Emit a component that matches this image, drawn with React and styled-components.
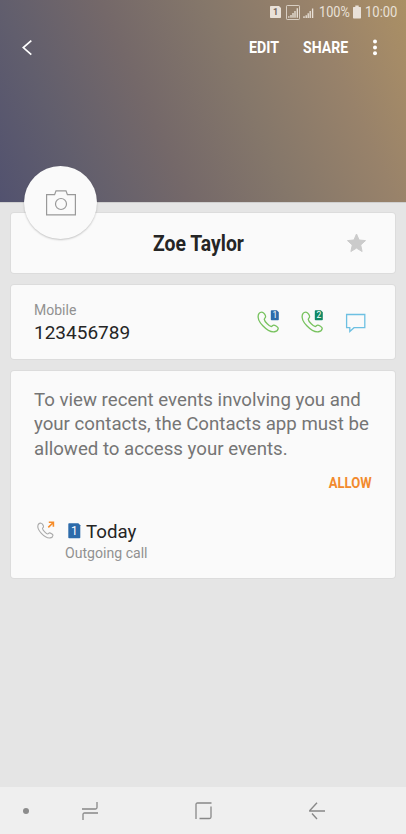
import React from 'react';
import styled, { createGlobalStyle } from 'styled-components';

const GlobalStyle = createGlobalStyle`
  * { box-sizing: border-box; }
  body { margin: 0; background: #e5e5e5; font-family: Roboto, 'Liberation Sans', sans-serif; }
  svg { display: block; overflow: visible; }
`;

const Screen = styled.main`
  width: 406px;
  height: 834px;
  display: flex;
  flex-direction: column;
  background: #e5e5e5;
  overflow: hidden;
`;

const Header = styled.header`
  position: relative;
  height: 202px;
  flex: none;
  color: #fff;
  background: linear-gradient(66deg, #52526f 0%, #615e6d 18%, #746869 38%, #85776a 59%, #98826a 80%, #a58b67 93%, #aa9064 100%);
  box-shadow: 0 1px 0 #cfcfcf;
`;

const StatusBar = styled.div`
  height: 24px;
  padding-right: 8px;
  display: flex;
  align-items: center;
  justify-content: flex-end;
  color: #e9e1d8;
`;

const Condensed = styled.span`
  display: inline-block;
  flex: none;
  white-space: nowrap;
  transform: scaleX(${(p) => p.$scale});
  transform-origin: ${(p) => p.$origin || 'left'} center;
`;

const StatusText = styled.div`
  width: ${(p) => p.$width}px;
  margin-left: ${(p) => p.$gap}px;
  font-size: 14px;
  line-height: 24px;
`;

const StatusIcon = styled.div`
  margin-left: ${(p) => p.$gap || 0}px;
`;

const ActionBar = styled.div`
  height: 48px;
  display: flex;
  align-items: center;
  padding: 0 29px 0 22px;
`;

const Action = styled.button`
  width: ${(p) => p.$width}px;
  margin-left: ${(p) => p.$gap}px;
  padding: 0;
  border: 0;
  background: none;
  color: inherit;
  text-align: left;
  font: 700 16px/24px Roboto, 'Liberation Sans', sans-serif;
`;

const Spacer = styled.div`
  flex: 1;
`;

const Avatar = styled.div`
  position: absolute;
  left: 24px;
  top: 166px;
  width: 73px;
  height: 73px;
  border-radius: 50%;
  background: #fafafa;
  box-shadow: 0 1px 2px rgba(0, 0, 0, 0.22);
  display: flex;
  align-items: center;
  justify-content: center;
`;

const Cards = styled.section`
  flex: 1;
  display: flex;
  flex-direction: column;
  gap: 12px;
  padding: 11px 11px 0;
`;

const Card = styled.article`
  height: ${(p) => p.$height}px;
  flex: none;
  border-radius: 3px;
  background: #fafafa;
  box-shadow: 0 0 0 1px rgba(0, 0, 0, 0.035);
`;

const NameCard = styled(Card)`
  display: grid;
  grid-template-columns: 142px 1fr 20px;
  align-items: center;
  padding-right: 29px;
`;

const Name = styled.h1`
  grid-column: 2;
  margin: 0;
  padding-top: 1px;
  font-size: 22px;
  line-height: 28px;
  font-weight: 700;
  color: #252525;
`;

const PhoneCard = styled(Card)`
  display: flex;
  justify-content: space-between;
  padding: 0 29px 0 23px;
`;

const PhoneText = styled.div`
  padding-top: 16px;
`;

const Label = styled.div`
  font-size: 14px;
  line-height: 18px;
  color: #919191;
`;

const Number = styled.div`
  margin-top: 2px;
  font-size: 19px;
  line-height: 24px;
  color: #252525;
`;

const PhoneActions = styled.div`
  display: flex;
  gap: 20px;
  padding-top: 24px;
`;

const EventsCard = styled(Card)`
  padding: 17px 23px 0;
`;

const Notice = styled.p`
  margin: 0;
  font-size: 18.67px;
  line-height: 24.3px;
  color: #757575;
  white-space: nowrap;
`;

const Allow = styled.div`
  display: flex;
  justify-content: flex-end;
  margin: 13px 0 0;
  font-size: 14.5px;
  line-height: 20px;
  font-weight: 700;
  color: #f28a2e;
`;

const Event = styled.div`
  display: flex;
  padding-top: 26px;
`;

const EventIcon = styled.div`
  width: 31px;
  padding: 1px 0 0 3px;
`;

const EventTitle = styled.div`
  display: flex;
  gap: 5px;
  padding-left: 3px;
  font-size: 18.7px;
  line-height: 24px;
  color: #252525;
`;

const EventMeta = styled.div`
  margin-top: -1px;
  font-size: 14.1px;
  line-height: 20px;
  color: #919191;
`;

const NavBar = styled.nav`
  height: 47px;
  flex: none;
  padding-top: 1px;
  background: #efefef;
  display: grid;
  grid-template-columns: 52px 76px 151px 76px;
  align-items: center;
  justify-items: center;
`;

const handset =
  'M5.8 1.1C4.3.7 2.1 1.8 1.4 3.6.4 6.8 2.4 11.2 6 15c3.8 4 8.9 6.6 12 6.2 2-.3 3.7-2.1 3.9-3.5.2-1.2-3.5-3.4-4.7-3.4-1.1 0-1.5 1.5-2.5 1.5-1.8 0-6.9-5-7.2-7.4-.1-1 1.4-1.5 1.4-2.6C9 4.5 7.1 1.4 5.8 1.1Z';

function SimBadge({ x = 0, y = 0, w = 8, h = 10, fill, color = '#fff', size = 8.5, weight = 400, children }) {
  return (
    <g transform={`translate(${x} ${y})`}>
      <path d={`M.8 0H${w - 2}L${w} 2V${h - 0.8}Q${w} ${h} ${w - 0.8} ${h}H.8Q0 ${h} 0 ${h - 0.8}V.8Q0 0 .8 0Z`} fill={fill} />
      <text x={w / 2} y={h / 2 + size * 0.36} textAnchor="middle" fontSize={size} fontFamily="Roboto" fontWeight={weight} fill={color}>
        {children}
      </text>
    </g>
  );
}

function CallIcon({ sim, fill }) {
  return (
    <svg width="24" height="26" viewBox="0 0 24 26">
      <path d={handset} transform="translate(0 2.2) scale(.97)" fill="none" stroke="#77c25e" strokeWidth="1.35" />
      <SimBadge x={13.8} y={1.2} fill={fill}>{sim}</SimBadge>
    </svg>
  );
}

function Signal({ framed }) {
  return framed ? (
    <svg width="14" height="15" viewBox="0 0 14 15">
      <rect x=".5" y=".5" width="13" height="14" rx=".8" fill="none" stroke="currentColor" strokeOpacity=".8" />
      <path d="M2.8 11.2v1.5M5 10v2.7M7 8v4.7M9 6v6.7M11.3 3.2v9.5" stroke="currentColor" strokeWidth="1.35" />
    </svg>
  ) : (
    <svg width="11" height="11" viewBox="0 0 11 11">
      <path d="M1 9.2v1.7M3.2 8.2v2.7M5.2 6.2v4.7M7.2 4v6.9M9.6 1.5v9.4" stroke="currentColor" strokeWidth="1.35" />
    </svg>
  );
}

export default function App() {
  return (
    <Screen>
      <GlobalStyle />
      <Header>
        <StatusBar>
          <StatusIcon>
            <svg width="11" height="12"><SimBadge w={11} h={12} fill="#e9e1d8" color="#75685e" size={9} weight={700}>1</SimBadge></svg>
          </StatusIcon>
          <StatusIcon $gap={5}><Signal framed /></StatusIcon>
          <StatusIcon $gap={3}><Signal /></StatusIcon>
          <StatusText $gap={5} $width={31}><Condensed $scale={0.91}>100%</Condensed></StatusText>
          <StatusIcon $gap={3}>
            <svg width="8" height="13"><path d="M2.3-.5h3.4v1.5H7.4Q8 1 8 1.6V11.8Q8 12.5 7.3 12.5H.7Q0 12.5 0 11.8V1.6Q0 1 .6 1H2.3Z" fill="currentColor" /></svg>
          </StatusIcon>
          <StatusText $gap={4} $width={33}><Condensed $scale={0.93}>10:00</Condensed></StatusText>
        </StatusBar>
        <ActionBar>
          <svg width="10" height="16" viewBox="0 0 10 16"><path d="M9.3.6 1.3 7.6l8 7" fill="none" stroke="#fff" strokeWidth="1.7" /></svg>
          <Spacer />
          <Action $width={30}><Condensed $scale={0.89}>EDIT</Condensed></Action>
          <Action $gap={24} $width={46}><Condensed $scale={0.88}>SHARE</Condensed></Action>
          <StatusIcon $gap={23}>
            <svg width="5" height="16" fill="#fff"><circle cx="3" cy="1.6" r="2" /><circle cx="3" cy="7.4" r="2" /><circle cx="3" cy="13.2" r="2" /></svg>
          </StatusIcon>
        </ActionBar>
        <Avatar>
          <svg width="30" height="26" viewBox="0 0 30 26" fill="none" stroke="#999" strokeWidth="1.2">
            <path d="M.6 4.6h8L10 .9h10l1.4 3.7h8v20.3H.6Z" /><circle cx="15" cy="14" r="5.5" />
          </svg>
        </Avatar>
      </Header>
      <Cards>
        <NameCard $height={60}>
          <Name><Condensed $scale={0.88}>Zoe Taylor</Condensed></Name>
          <svg width="20" height="20" viewBox="0 0 20 20"><path d="m10.5 1 2.6 6 6.4.6-4.8 4.4 1.4 6.5-5.6-3.4-5.6 3.4L6.3 12 1.5 7.6 7.9 7Z" fill="#cbcbcb" stroke="#cbcbcb" strokeLinejoin="round" /></svg>
        </NameCard>
        <PhoneCard $height={74}>
          <PhoneText>
            <Label>Mobile</Label>
            <Number>123456789</Number>
          </PhoneText>
          <PhoneActions>
            <CallIcon sim="1" fill="#2d6baa" />
            <CallIcon sim="2" fill="#118865" />
            <svg width="21" height="26" viewBox="0 0 21 26"><path d="M1.6 5.5h18.2v13.2H9l-4.2 3.9v-3.9H1.6Z" fill="none" stroke="#6dc0e2" strokeWidth="1.3" /></svg>
          </PhoneActions>
        </PhoneCard>
        <EventsCard $height={207}>
          <Notice>
            To view recent events involving you and<br />
            your contacts, the Contacts app must be<br />
            allowed to access your events.
          </Notice>
          <Allow><Condensed $scale={0.9} $origin="right">ALLOW</Condensed></Allow>
          <Event>
            <EventIcon>
              <svg width="20" height="20" viewBox="0 0 20 20">
                <path d={handset} transform="translate(0 1.4) scale(.73)" fill="none" stroke="#aaa" strokeWidth="1.5" />
                <path d="M11.3 6.4 16 1.8M11.8 1.3h4.6v4.4" fill="none" stroke="#f68b27" strokeWidth="1.6" />
              </svg>
            </EventIcon>
            <div>
              <EventTitle>
                <svg width="13" height="24"><SimBadge x={0.3} y={3.2} w={12} h={15} fill="#2d6baa" size={12}>1</SimBadge></svg>
                <span>Today</span>
              </EventTitle>
              <EventMeta>Outgoing call</EventMeta>
            </div>
          </Event>
        </EventsCard>
      </Cards>
      <NavBar>
        <svg width="6" height="6"><circle cx="3" cy="3" r="3" fill="#8c8c8c" /></svg>
        <svg width="16" height="18" viewBox="0 0 16 18" fill="none" stroke="#888" strokeWidth="1.3"><path d="M0 7h13.5Q15 7 15 5.5V0M16 11H2.5Q1 11 1 12.5V18" /></svg>
        <svg width="17" height="18" viewBox="0 0 17 18" fill="none" stroke="#888" strokeWidth="1.3"><path d="M16.5 1H2.5Q1 1 1 2.5V17M4.5 16.5H14.5Q16 16.5 16 15V4.5" /></svg>
        <svg width="16" height="18" viewBox="0 0 16 18" fill="none" stroke="#888" strokeWidth="1.4"><path d="M8 .8.8 8.5V9H16M3 11.5 8 17" /></svg>
      </NavBar>
    </Screen>
  );
}
